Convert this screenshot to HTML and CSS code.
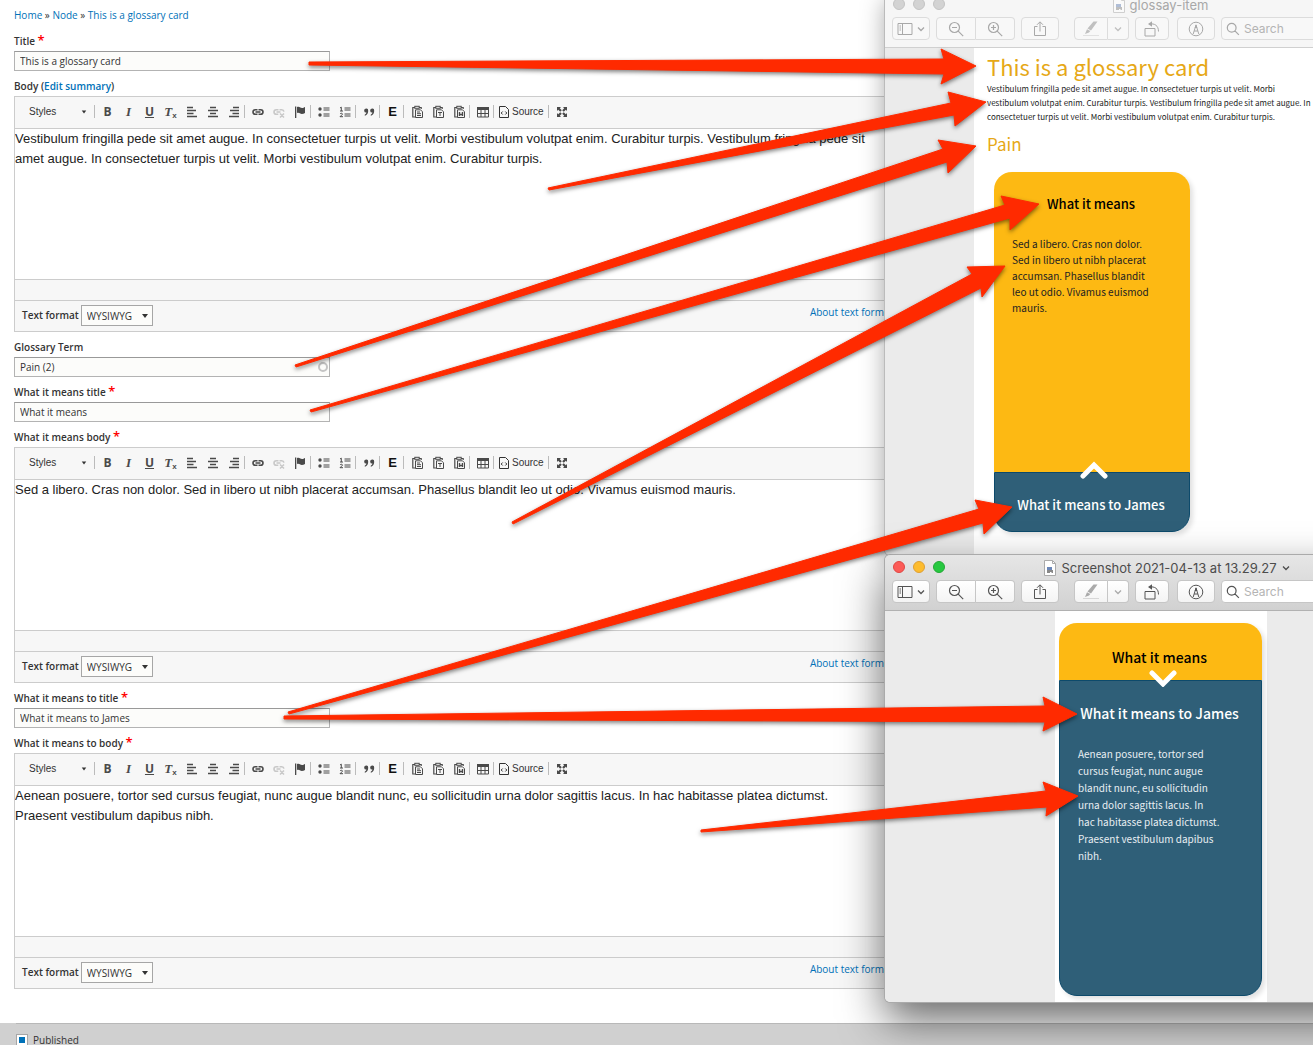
FILE: index.html
```html
<!DOCTYPE html>
<html lang="en">
<head>
<meta charset="utf-8">
<title>Edit glossary card</title>
<link rel="stylesheet" href="styles.css">
</head>
<body>
<svg class="sprite" aria-hidden="true">
  <symbol id="left" viewBox="0 0 16 16"><path d="M3 3.5h6M3 6.5h9M3 9.5h6.500M3 12.500h10" stroke="currentColor" stroke-width="1.700"/></symbol>
  <symbol id="center" viewBox="0 0 16 16"><path d="M5 3.500h6M3 6.500h10M5 9.500h6M3 12.500h10" stroke="currentColor" stroke-width="1.700"/></symbol>
  <symbol id="right" viewBox="0 0 16 16"><path d="M7 3.500h6M4 6.500h9M6.500 9.500h6.500M3 12.500h10" stroke="currentColor" stroke-width="1.700"/></symbol>
  <symbol id="link" viewBox="0 0 16 16"><g fill="none" stroke="currentColor" stroke-width="1.600"><path d="M7.500 5.700H5.300a2.300 2.300 0 0 0 0 4.600h2.200M8.500 5.700h2.200a2.300 2.300 0 0 1 0 4.600H8.500M5.500 8h5"/></g></symbol>
  <symbol id="unlink" viewBox="0 0 16 16"><g fill="none" stroke="currentColor" stroke-width="1.600"><path d="M7.500 5.700H5.300a2.300 2.300 0 0 0 0 4.600h2M8.500 5.700h2.200a2.300 2.300 0 0 1 2.200 2M5.500 8h4M9 9.500l4 4M13 9.500l-4 4"/></g></symbol>
  <symbol id="flag" viewBox="0 0 16 16"><path d="M3 2.500h1.300V14H3zM5 3c2.500-1 3.500 1 5 1 1.200 0 2-.5 3-1v6c-1 .6-2 1-3.200 1C8 10 7.300 8.300 5 9z" fill="currentColor"/></symbol>
  <symbol id="bullets" viewBox="0 0 16 16"><g fill="currentColor"><circle cx="4" cy="5" r="1.700"/><circle cx="4" cy="11" r="1.700"/><path d="M7.500 3.500h6v1h-6zM7.500 5.500h6v1h-6zM7.500 9.500h6v1h-6zM7.500 11.500h6v1h-6z"/></g></symbol>
  <symbol id="numbers" viewBox="0 0 16 16"><path fill="none" stroke="currentColor" d="M3 4l1.300-.8v3.800M3 7h3M3 10c.5-1 2.500-1 2.500.2C5.500 11 3 12 3 12.700h3M7.500 4h6M7.500 6h6M7.500 10h6M7.500 12h6"/></symbol>
  <symbol id="quote" viewBox="0 0 16 16"><path fill="currentColor" d="M5 4.500a2 2 0 0 1 2.200 2.200c0 2.500-1.200 4.300-3.200 5l-.4-.8c1-.5 1.700-1.300 1.800-2.300A2 2 0 0 1 5 4.500zM11 4.500a2 2 0 0 1 2.200 2.200c0 2.500-1.200 4.300-3.200 5l-.4-.8c1-.5 1.700-1.300 1.800-2.300A2 2 0 0 1 11 4.500z"/></symbol>
  <symbol id="paste" viewBox="0 0 16 16"><g fill="none" stroke="currentColor"><path d="M6.500 13H3.800V3.500H6M10 3.500h2.200V5" stroke-width="1.200"/><rect x="5.800" y="2.300" width="4.400" height="2"/><path d="M6.500 5.800h5l2 2v5.700h-7zM8 8h3M8 9.700h4M8 11.500h4"/></g></symbol>
  <symbol id="pastetext" viewBox="0 0 16 16"><g fill="none" stroke="currentColor"><path d="M6.500 13H3.800V3.500H6M10 3.500h2.200V5" stroke-width="1.200"/><rect x="5.800" y="2.300" width="4.400" height="2"/><path d="M6.500 5.800h5l2 2v5.700h-7zM8 8.500h4M10 8.500v3.500"/></g></symbol>
  <symbol id="pasteword" viewBox="0 0 16 16"><g fill="none" stroke="currentColor"><path d="M6.500 13H3.800V3.500H6M10 3.500h2.200V5" stroke-width="1.200"/><rect x="5.800" y="2.300" width="4.400" height="2"/><path d="M6.500 5.800h5l2 2v5.700h-7z"/><path d="M8.500 8v4M11.500 8v4M8.500 10.500h3" stroke-width="1.400"/></g></symbol>
  <symbol id="table" viewBox="0 0 16 16"><path fill="currentColor" d="M2 3h12v3H2z"/><path fill="none" stroke="currentColor" d="M2.500 3.500h11v9.500h-11zM2.500 9.500h11M6 5v8M10 5v8"/></symbol>
  <symbol id="source" viewBox="0 0 16 16"><path fill="none" stroke="currentColor" d="M3.500 2.500h6l3 3v8h-9zM6.700 7.500L5.200 9l1.500 1.500M9.300 7.500L10.800 9l-1.500 1.500"/></symbol>
  <symbol id="expand" viewBox="0 0 16 16"><path fill="currentColor" d="M3 3h4L5.800 4.200l2 2-1.600 1.600-2-2L3 7zM13 3v4l-1.200-1.200-2 2-1.600-1.600 2-2L9 3zM3 13V9l1.200 1.200 2-2 1.600 1.600-2 2L7 13zM13 13H9l1.200-1.200-2-2 1.600-1.600 2 2L13 9z"/></symbol>
  <symbol id="chev" viewBox="0 0 8 8"><path d="M1 2.500l3 3 3-3" fill="none" stroke="currentColor" stroke-width="1.300"/></symbol>
  <symbol id="sidebar" viewBox="0 0 16 16"><path d="M1 2.500h14v11H1zM5.500 2.500v11M2.500 5h1.500M2.500 7h1.500M2.500 9h1.500" fill="none" stroke="currentColor"/></symbol>
  <symbol id="zoomout" viewBox="0 0 16 16"><path d="M6.500 1.500a5 5 0 1 0 0 10 5 5 0 0 0 0-10zM10.200 10.200l5 5M4 6.500h5" fill="none" stroke="currentColor" stroke-width="1.200"/></symbol>
  <symbol id="zoomin" viewBox="0 0 16 16"><path d="M6.500 1.500a5 5 0 1 0 0 10 5 5 0 0 0 0-10zM10.200 10.200l5 5M4 6.500h5M6.500 4v5" fill="none" stroke="currentColor" stroke-width="1.200"/></symbol>
  <symbol id="share" viewBox="0 0 16 16"><path d="M5.500 5.500h-3v9h11v-9h-3M8 10.500V1M5 3.800L8 .8l3 3" fill="none" stroke="currentColor"/></symbol>
  <symbol id="marker" viewBox="0 0 18 16"><path d="M11.500.5h4L9 9.500l-3.500-2zM5 8.200L8.300 10 7 11.500 3 13z" fill="currentColor"/><path d="M1 14.500h16" stroke="currentColor" opacity=".4"/></symbol>
  <symbol id="rotate" viewBox="0 0 16 16"><path d="M1 7.500h10v7.500H1zM5.500 3c5-.8 9 1.500 9 7.500" fill="none" stroke="currentColor"/><path d="M4 3l4-2.800v5.600z" fill="currentColor"/></symbol>
  <symbol id="markup" viewBox="0 0 16 16"><circle cx="8" cy="8" r="6.800" fill="none" stroke="currentColor"/><path d="M5.200 13L8 4l2.800 9M6.200 10h3.600" fill="none" stroke="currentColor"/><path d="M8 3l1.300 4H6.700z" fill="currentColor"/></symbol>
  <symbol id="search" viewBox="0 0 16 16"><path d="M6.500 1.500a5 5 0 1 0 0 10 5 5 0 0 0 0-10zM10.200 10.200l4.500 4.500" fill="none" stroke="currentColor" stroke-width="1.400"/></symbol>
  <symbol id="doc" viewBox="0 0 12 16"><path d="M.5 .5h8l3 3v12H.5z" fill="#fff" stroke="#aaa"/><path d="M8.500.5v3h3" fill="none" stroke="#aaa"/><path d="M3 7h5v3H3z" fill="#6a86b8"/><path d="M3 10h6v3H7.500v-1H6v1H3z" fill="#888"/></symbol>
  <symbol id="caret" viewBox="0 0 8 8"><path d="M1 2h6L4 6z" fill="currentColor"/></symbol>
</svg>

<div class="page">
  <nav class="breadcrumb" aria-label="Breadcrumb"><a href="#">Home</a> » <a href="#">Node</a> » <a href="#">This is a glossary card</a></nav>

  <form class="form">
    <div class="field">
      <label class="label" for="title">Title <span class="req">*</span></label>
      <input class="input" id="title" type="text" value="This is a glossary card">
    </div>

    <div class="field">
      <div class="label"><label for="body">Body</label> (<a href="#">Edit summary</a>)</div>
      <div class="editor">
        <div class="toolbar">
          <button type="button" class="styles">Styles<svg><use href="#caret"/></svg></button><i class="sep"></i>
          <button type="button" class="tool">B</button><button type="button" class="tool italic">I</button><button type="button" class="tool under">U</button><button type="button" class="tool italic">T<sub>x</sub></button>
          <button type="button" class="tool" aria-label="Align left"><svg><use href="#left"/></svg></button><button type="button" class="tool" aria-label="Center"><svg><use href="#center"/></svg></button><button type="button" class="tool" aria-label="Align right"><svg><use href="#right"/></svg></button><i class="sep"></i>
          <button type="button" class="tool" aria-label="Link"><svg><use href="#link"/></svg></button><button type="button" class="tool off" aria-label="Unlink" disabled><svg><use href="#unlink"/></svg></button><button type="button" class="tool" aria-label="Anchor"><svg><use href="#flag"/></svg></button><i class="sep"></i>
          <button type="button" class="tool" aria-label="Bulleted list"><svg><use href="#bullets"/></svg></button><button type="button" class="tool" aria-label="Numbered list"><svg><use href="#numbers"/></svg></button><i class="sep"></i>
          <button type="button" class="tool" aria-label="Block quote"><svg><use href="#quote"/></svg></button><i class="sep"></i>
          <button type="button" class="tool embed">E</button><i class="sep"></i>
          <button type="button" class="tool" aria-label="Paste"><svg><use href="#paste"/></svg></button><button type="button" class="tool" aria-label="Paste as text"><svg><use href="#pastetext"/></svg></button><button type="button" class="tool" aria-label="Paste from Word"><svg><use href="#pasteword"/></svg></button><i class="sep"></i>
          <button type="button" class="tool" aria-label="Table"><svg><use href="#table"/></svg></button><i class="sep"></i>
          <button type="button" class="source"><svg><use href="#source"/></svg>Source</button><i class="sep"></i>
          <button type="button" class="tool" aria-label="Maximize"><svg><use href="#expand"/></svg></button>
        </div>
        <textarea class="content" id="body">Vestibulum fringilla pede sit amet augue. In consectetuer turpis ut velit. Morbi vestibulum volutpat enim. Curabitur turpis. Vestibulum fringilla pede sit amet augue. In consectetuer turpis ut velit. Morbi vestibulum volutpat enim. Curabitur turpis.</textarea>
        <div class="pathbar"></div>
        <div class="format">
          <label for="format1">Text format</label>
          <span class="select"><select id="format1"><option>WYSIWYG</option></select><svg><use href="#caret"/></svg></span>
          <a href="#">About text formats</a>
        </div>
      </div>
    </div>

    <div class="field">
      <label class="label" for="term">Glossary Term</label>
      <div class="auto"><input class="input" id="term" type="text" value="Pain (2)"><span class="ring"></span></div>
    </div>

    <div class="field">
      <label class="label" for="means">What it means title <span class="req">*</span></label>
      <input class="input" id="means" type="text" value="What it means">
    </div>

    <div class="field">
      <label class="label" for="meansbody">What it means body <span class="req">*</span></label>
      <div class="editor">
        <div class="toolbar">
          <button type="button" class="styles">Styles<svg><use href="#caret"/></svg></button><i class="sep"></i>
          <button type="button" class="tool">B</button><button type="button" class="tool italic">I</button><button type="button" class="tool under">U</button><button type="button" class="tool italic">T<sub>x</sub></button>
          <button type="button" class="tool" aria-label="Align left"><svg><use href="#left"/></svg></button><button type="button" class="tool" aria-label="Center"><svg><use href="#center"/></svg></button><button type="button" class="tool" aria-label="Align right"><svg><use href="#right"/></svg></button><i class="sep"></i>
          <button type="button" class="tool" aria-label="Link"><svg><use href="#link"/></svg></button><button type="button" class="tool off" aria-label="Unlink" disabled><svg><use href="#unlink"/></svg></button><button type="button" class="tool" aria-label="Anchor"><svg><use href="#flag"/></svg></button><i class="sep"></i>
          <button type="button" class="tool" aria-label="Bulleted list"><svg><use href="#bullets"/></svg></button><button type="button" class="tool" aria-label="Numbered list"><svg><use href="#numbers"/></svg></button><i class="sep"></i>
          <button type="button" class="tool" aria-label="Block quote"><svg><use href="#quote"/></svg></button><i class="sep"></i>
          <button type="button" class="tool embed">E</button><i class="sep"></i>
          <button type="button" class="tool" aria-label="Paste"><svg><use href="#paste"/></svg></button><button type="button" class="tool" aria-label="Paste as text"><svg><use href="#pastetext"/></svg></button><button type="button" class="tool" aria-label="Paste from Word"><svg><use href="#pasteword"/></svg></button><i class="sep"></i>
          <button type="button" class="tool" aria-label="Table"><svg><use href="#table"/></svg></button><i class="sep"></i>
          <button type="button" class="source"><svg><use href="#source"/></svg>Source</button><i class="sep"></i>
          <button type="button" class="tool" aria-label="Maximize"><svg><use href="#expand"/></svg></button>
        </div>
        <textarea class="content" id="meansbody">Sed a libero. Cras non dolor. Sed in libero ut nibh placerat accumsan. Phasellus blandit leo ut odio. Vivamus euismod mauris.</textarea>
        <div class="pathbar"></div>
        <div class="format">
          <label for="format2">Text format</label>
          <span class="select"><select id="format2"><option>WYSIWYG</option></select><svg><use href="#caret"/></svg></span>
          <a href="#">About text formats</a>
        </div>
      </div>
    </div>

    <div class="field">
      <label class="label" for="meansto">What it means to title <span class="req">*</span></label>
      <input class="input" id="meansto" type="text" value="What it means to James">
    </div>

    <div class="field">
      <label class="label" for="meanstobody">What it means to body <span class="req">*</span></label>
      <div class="editor">
        <div class="toolbar">
          <button type="button" class="styles">Styles<svg><use href="#caret"/></svg></button><i class="sep"></i>
          <button type="button" class="tool">B</button><button type="button" class="tool italic">I</button><button type="button" class="tool under">U</button><button type="button" class="tool italic">T<sub>x</sub></button>
          <button type="button" class="tool" aria-label="Align left"><svg><use href="#left"/></svg></button><button type="button" class="tool" aria-label="Center"><svg><use href="#center"/></svg></button><button type="button" class="tool" aria-label="Align right"><svg><use href="#right"/></svg></button><i class="sep"></i>
          <button type="button" class="tool" aria-label="Link"><svg><use href="#link"/></svg></button><button type="button" class="tool off" aria-label="Unlink" disabled><svg><use href="#unlink"/></svg></button><button type="button" class="tool" aria-label="Anchor"><svg><use href="#flag"/></svg></button><i class="sep"></i>
          <button type="button" class="tool" aria-label="Bulleted list"><svg><use href="#bullets"/></svg></button><button type="button" class="tool" aria-label="Numbered list"><svg><use href="#numbers"/></svg></button><i class="sep"></i>
          <button type="button" class="tool" aria-label="Block quote"><svg><use href="#quote"/></svg></button><i class="sep"></i>
          <button type="button" class="tool embed">E</button><i class="sep"></i>
          <button type="button" class="tool" aria-label="Paste"><svg><use href="#paste"/></svg></button><button type="button" class="tool" aria-label="Paste as text"><svg><use href="#pastetext"/></svg></button><button type="button" class="tool" aria-label="Paste from Word"><svg><use href="#pasteword"/></svg></button><i class="sep"></i>
          <button type="button" class="tool" aria-label="Table"><svg><use href="#table"/></svg></button><i class="sep"></i>
          <button type="button" class="source"><svg><use href="#source"/></svg>Source</button><i class="sep"></i>
          <button type="button" class="tool" aria-label="Maximize"><svg><use href="#expand"/></svg></button>
        </div>
        <textarea class="content" id="meanstobody">Aenean posuere, tortor sed cursus feugiat, nunc augue blandit nunc, eu sollicitudin urna dolor sagittis lacus. In hac habitasse platea dictumst. Praesent vestibulum dapibus nibh.</textarea>
        <div class="pathbar"></div>
        <div class="format">
          <label for="format3">Text format</label>
          <span class="select"><select id="format3"><option>WYSIWYG</option></select><svg><use href="#caret"/></svg></span>
          <a href="#">About text formats</a>
        </div>
      </div>
    </div>
  </form>

  <footer class="footer">
    <div class="publish"><input type="checkbox" id="published" checked><label for="published">Published</label></div>
  </footer>

  <div class="desktop">
    <section class="window window-back inactive">
      <header class="chrome">
        <div class="titlebar">
          <div class="lights"><span></span><span></span><span></span></div>
          <div class="wtitle"><svg class="docicon"><use href="#doc"/></svg><span>glossay-item</span><span class="chevslot"></span></div>
        </div>
        <div class="wtools">
          <button type="button" class="wbtn" aria-label="Sidebar"><svg><use href="#sidebar"/></svg><svg class="small"><use href="#chev"/></svg></button>
          <div class="pair"><button type="button" class="wbtn" aria-label="Zoom out"><svg><use href="#zoomout"/></svg></button><button type="button" class="wbtn" aria-label="Zoom in"><svg><use href="#zoomin"/></svg></button></div>
          <button type="button" class="wbtn" aria-label="Share"><svg><use href="#share"/></svg></button>
          <div class="pair mark"><button type="button" class="wbtn" aria-label="Highlight"><svg class="wide"><use href="#marker"/></svg></button><button type="button" class="wbtn narrow" aria-label="Highlight colour"><svg class="small"><use href="#chev"/></svg></button></div>
          <button type="button" class="wbtn rot" aria-label="Rotate"><svg><use href="#rotate"/></svg></button>
          <button type="button" class="wbtn" aria-label="Markup"><svg><use href="#markup"/></svg></button>
          <label class="wsearch"><svg><use href="#search"/></svg><input type="search" placeholder="Search" aria-label="Search"></label>
        </div>
      </header>
      <div class="canvas">
        <article class="sheet">
          <h1>This is a glossary card</h1>
          <p class="intro">Vestibulum fringilla pede sit amet augue. In consectetuer turpis ut velit. Morbi vestibulum volutpat enim. Curabitur turpis. Vestibulum fringilla pede sit amet augue. In consectetuer turpis ut velit. Morbi vestibulum volutpat enim. Curabitur turpis.</p>
          <h2>Pain</h2>
          <div class="card card-means">
            <div class="face gold"><h3>What it means</h3><p>Sed a libero. Cras non dolor. Sed in libero ut nibh placerat accumsan. Phasellus blandit leo ut odio. Vivamus euismod mauris.</p></div>
            <div class="face blue"><svg class="flip" viewBox="0 0 28 18"><path d="M3 15L14 4l11 11"/></svg><h3>What it means to James</h3></div>
          </div>
        </article>
      </div>
    </section>

    <section class="window window-front">
      <header class="chrome">
        <div class="titlebar">
          <div class="lights"><span class="red"></span><span class="amber"></span><span class="green"></span></div>
          <div class="wtitle"><svg class="docicon"><use href="#doc"/></svg><span>Screenshot 2021-04-13 at 13.29.27</span><span class="chevslot"><svg class="small"><use href="#chev"/></svg></span></div>
        </div>
        <div class="wtools">
          <button type="button" class="wbtn" aria-label="Sidebar"><svg><use href="#sidebar"/></svg><svg class="small"><use href="#chev"/></svg></button>
          <div class="pair"><button type="button" class="wbtn" aria-label="Zoom out"><svg><use href="#zoomout"/></svg></button><button type="button" class="wbtn" aria-label="Zoom in"><svg><use href="#zoomin"/></svg></button></div>
          <button type="button" class="wbtn" aria-label="Share"><svg><use href="#share"/></svg></button>
          <div class="pair mark"><button type="button" class="wbtn" aria-label="Highlight"><svg class="wide"><use href="#marker"/></svg></button><button type="button" class="wbtn narrow" aria-label="Highlight colour"><svg class="small"><use href="#chev"/></svg></button></div>
          <button type="button" class="wbtn rot" aria-label="Rotate"><svg><use href="#rotate"/></svg></button>
          <button type="button" class="wbtn" aria-label="Markup"><svg><use href="#markup"/></svg></button>
          <label class="wsearch"><svg><use href="#search"/></svg><input type="search" placeholder="Search" aria-label="Search"></label>
        </div>
      </header>
      <div class="canvas centered">
        <article class="sheet narrow-sheet">
          <div class="card card-james">
            <div class="face gold"><h3>What it means</h3></div>
            <div class="face blue"><svg class="flip" viewBox="0 0 28 18"><path d="M3 4l11 11L25 4"/></svg><h3>What it means to James</h3><p>Aenean posuere, tortor sed cursus feugiat, nunc augue blandit nunc, eu sollicitudin urna dolor sagittis lacus. In<br>hac habitasse platea dictumst. Praesent vestibulum dapibus nibh.</p></div>
          </div>
        </article>
      </div>
    </section>

    <svg class="arrows" aria-hidden="true">
      <path d="M309 62L944 59 941 49 976 66 941 84 944 74 309 65Z"/>
      <path d="M548 188L951 103 948 92 986 102 955 126 954 115 549 190Z"/>
      <path d="M295 365L943 149 938 140 976 146 948 173 947 162 296 367Z"/>
      <path d="M310 410L1005 205 1001 196 1039 204 1010 230 1010 218 311 412Z"/>
      <path d="M512 522L972 274 967 267 1005 266 982 297 981 288 513 524Z"/>
      <path d="M288 712L979 509 975 500 1012 507 984 534 983 523 289 714Z"/>
      <path d="M284 716L1045 706 1043 697 1077 714 1043 731 1045 722 284 719Z"/>
      <path d="M701 830L1046 791 1043 782 1078 796 1046 816 1047 807 701 832Z"/>
    </svg>
  </div>
</div>
</body>
</html>
```

FILE: styles.css
```css
* { box-sizing: border-box; }
body {
  margin: 0;
  background: #fff;
  color: #333;
  font: 10px/20px "Open Sans", sans-serif;
}
a { color: #0071b8; text-decoration: none; }
button, input, select, textarea { font: inherit; color: inherit; margin: 0; }
button { background: none; border: 0; padding: 0; }
.sprite { display: none; }
svg { width: 16px; height: 16px; flex: none; }

.page {
  position: relative;
  display: flex;
  flex-direction: column;
  min-height: 100vh;
  overflow: hidden;
}
.breadcrumb { padding: 5px 14px 6px; }

/* node form */
.form {
  display: flex;
  flex-direction: column;
  gap: 5px;
  width: 68%;
  margin-left: 14px;
}
.label { display: block; font-weight: 600; }
.req { color: #f00; font-size: 13px; line-height: 16px; }
.input {
  display: block;
  width: 316px;
  height: 20px;
  padding: 0 5px;
  border: 1px solid #b3b3b3;
  border-top-color: #999;
  background: #fcfcfa;
}
.auto { position: relative; width: 316px; }
.ring {
  position: absolute;
  right: 2px;
  top: 5px;
  width: 10px;
  height: 10px;
  border: 2px solid #c4c4c4;
  border-radius: 50%;
}
.editor { border: 1px solid #ccc; }
.toolbar {
  display: flex;
  align-items: center;
  height: 31px;
  padding-bottom: 2px;
  background: #f7f7f7;
  color: #4a4a4a;
}
.styles, .source {
  display: flex;
  align-items: center;
  font: 10px/16px "Liberation Sans", sans-serif;
  color: #333;
}
.styles { justify-content: space-between; width: 79px; padding: 0 7px 0 14px; }
.styles svg { width: 6px; height: 6px; }
.source { width: 52px; }
.sep { width: 3px; height: 13px; border-left: 1px solid #bbb; }
.tool {
  display: flex;
  align-items: center;
  justify-content: center;
  width: 21px;
  height: 16px;
  font-size: 12px;
  line-height: 16px;
  font-weight: 700;
}
.italic { font: italic 700 13px/16px "Liberation Serif", serif; }
.italic sub { font: 700 8px/8px "Liberation Sans", sans-serif; align-self: flex-end; }
.under { text-decoration: underline; }
.embed { color: #111; font-family: "Liberation Sans", sans-serif; font-size: 13px; }
.off { color: #c8c8c8; }
.content {
  display: block;
  width: 100%;
  height: 152px;
  padding: 0 30px 0 0;
  border: solid #ccc;
  border-width: 1px 0;
  resize: none;
  outline: 0;
  overflow: hidden;
  background: #fff;
  color: #222;
  font: 13px/20px "Liberation Sans", sans-serif;
}
.pathbar { height: 21px; background: #f7f7f7; border-bottom: 1px solid #ccc; }
.format {
  display: flex;
  align-items: center;
  gap: 2px;
  height: 30px;
  padding: 0 8px 2px 7px;
  background: #f7f7f7;
}
.format label { font-weight: 600; }
.format a { margin-left: auto; padding-bottom: 6px; }
.select { position: relative; }
.select select {
  display: block;
  appearance: none;
  width: 72px;
  height: 21px;
  padding: 0 5px;
  border: 1px solid #a6a6a6;
  border-radius: 0;
  background: #fcfcfa;
}
.select svg { position: absolute; right: 4px; top: 7px; width: 8px; height: 8px; }

.footer { flex: 1; margin-top: 34px; padding-left: 16px; background: #d0d0d0; }
.publish {
  display: flex;
  gap: 5px;
  align-items: center;
  padding-top: 11px;
  height: 22px;
  border-top: 1px solid #b8b8b8;
}
.publish input {
  appearance: none;
  width: 12px;
  height: 12px;
  border: 1px solid #a6a6a6;
  background: #0071b8 content-box;
  padding: 2px;
  box-shadow: inset 0 0 0 2px #fff;
}

/* preview windows floating over the form */
.desktop { position: absolute; inset: 0; overflow: hidden; }
.window {
  position: absolute;
  left: 885px;
  width: 564px;
  display: flex;
  flex-direction: column;
  border-radius: 5px;
  overflow: hidden;
  font-family: Inter, sans-serif;
}
.window-back { top: -8px; height: 563px; box-shadow: 0 0 0 1px #bbb, 0 8px 24px rgba(0, 0, 0, .35); }
.window-front { top: 555px; height: 447px; box-shadow: 0 0 0 1px #aaa, 0 18px 44px rgba(0, 0, 0, .6); }
.chrome {
  flex: none;
  height: 56px;
  border-bottom: 1px solid #b1b1b1;
  background: linear-gradient(#e6e6e6, #d1d1d1);
  color: #555;
}
.inactive .chrome { background: #f6f6f6; border-color: #d0d0d0; color: #a8a8a8; }
.titlebar { position: relative; display: flex; justify-content: center; height: 25px; }
.lights { position: absolute; left: 8px; top: 6px; display: flex; gap: 8px; }
.lights span { width: 12px; height: 12px; border-radius: 50%; background: #d3d3d3; border: 1px solid #c4c4c4; }
.lights .red { background: #fc5b57; border-color: #df4744; }
.lights .amber { background: #fdbc2e; border-color: #de9f34; }
.lights .green { background: #27c840; border-color: #24a836; }
.wtitle { display: flex; align-items: center; gap: 5px; height: 25px; font-size: 13px; line-height: 16px; color: #4c4c4c; }
.inactive .wtitle { color: #a8a8a8; }
.docicon { width: 12px; height: 16px; }
.inactive .docicon { opacity: .5; }
.chevslot { display: flex; width: 8px; }
.small { width: 8px; height: 8px; }
.wtools { display: flex; gap: 6px; padding: 0 7px; }
.wbtn {
  display: flex;
  flex: none;
  align-items: center;
  justify-content: center;
  gap: 4px;
  width: 38px;
  height: 23px;
  border: 1px solid #c6c6c6;
  border-radius: 4px;
  background: linear-gradient(#fff, #f4f4f4);
}
.inactive .wbtn, .inactive .wsearch { background: #f8f8f8; border-color: #dcdcdc; }
.pair { display: flex; flex: none; }
.pair .wbtn { width: 39px; }
.pair .wbtn:first-child { width: 40px; border-radius: 4px 0 0 4px; }
.pair .wbtn:last-child { border-radius: 0 4px 4px 0; border-left: 0; }
.mark { margin-left: 9px; color: #aaa; }
.mark .wbtn:first-child { width: 34px; }
.mark .narrow { width: 21px; }
.inactive .mark { color: #c0c0c0; }
.wide { width: 18px; }
.wbtn.rot { width: 34px; margin-right: 2px; }
.wsearch {
  display: flex;
  align-items: center;
  gap: 4px;
  flex: 1;
  min-width: 0;
  height: 23px;
  padding-left: 4px;
  border: 1px solid #c6c6c6;
  border-radius: 4px;
  background: #fff;
}
.wsearch svg { width: 14px; height: 14px; }
.wsearch input { border: 0; padding: 0; background: none; outline: 0; width: 100%; min-width: 0; font-size: 12px; line-height: 20px; }
.wsearch input::placeholder { color: #b4b4b4; opacity: 1; }
.canvas { flex: 1; display: flex; padding-left: 89px; background: #ebebeb; }
.canvas.centered { justify-content: center; padding: 0 12px 0 0; }

/* rendered glossary card */
.sheet {
  flex: 1;
  padding: 3px 0 0 13px;
  background: #fff;
  color: #222;
  font-family: "Noto Sans CJK SC", sans-serif;
}
.sheet h1, .sheet h2, .sheet h3, .sheet p { margin: 0; font-weight: 400; }
.sheet h1 { color: #e6a817; font-size: 22px; line-height: 31px; }
.sheet h2 { margin-top: 8px; color: #e6a817; font-size: 17px; line-height: 24px; }
.sheet .intro { width: 325px; font-size: 8px; line-height: 14px; }
.sheet.narrow-sheet { flex: none; width: 212px; padding: 12px 5px 6px 4px; }
.card {
  display: flex;
  flex-direction: column;
  border-radius: 18px;
  box-shadow: 3px 3px 5px rgba(0, 0, 0, .12);
}
.card-means { width: 196px; height: 360px; margin: 16px 0 0 7px; }
.card-james { height: 373px; }
.face { position: relative; padding: 20px 20px 0 18px; }
.card h3 { color: #000; font-size: 13px; line-height: 24px; font-weight: 500; text-align: center; white-space: nowrap; }
.card-james h3 { font-size: 14px; }
.card p { margin-top: 20px; padding-right: 18px; font-size: 10px; line-height: 16px; }
.card-james p { line-height: 17px; }
.gold { border-radius: 18px 18px 0 0; background: #fdb913; }
.blue { border: 1px solid #0d4a6b; border-radius: 0 0 18px 18px; background: #2f5f78; color: #e8eef2; }
.card .blue h3 { color: #fff; }
.card-means .gold { flex: 1; }
.card-means .blue { height: 60px; }
.card-james .gold { height: 57px; padding-top: 22px; }
.card-james .blue { flex: 1; }
.flip {
  position: absolute;
  left: 50%;
  top: -12px;
  width: 28px;
  height: 18px;
  margin-left: -12px;
  fill: none;
  stroke: #fff;
  stroke-width: 5;
  stroke-linecap: round;
}

.arrows {
  position: absolute;
  inset: 0;
  width: 100%;
  height: 100%;
  pointer-events: none;
  filter: drop-shadow(0 2px 2px rgba(0, 0, 0, .5));
}
.arrows path { fill: #ff2a00; stroke: #ff2a00; stroke-linejoin: round; }
```
